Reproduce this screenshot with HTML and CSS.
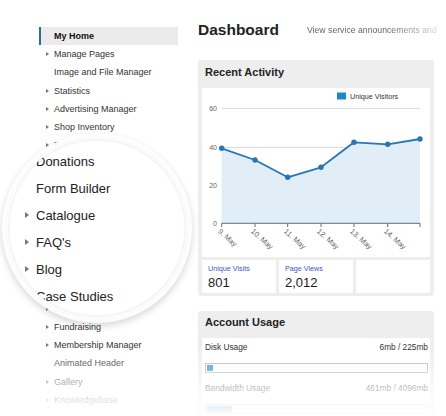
FILE: index.html
```html
<!DOCTYPE html>
<html lang="en">
<head>
    <meta charset="UTF-8">
    <meta name="viewport" content="width=device-width, initial-scale=1.0">
    <title>Dashboard</title>
    <link rel="stylesheet" href="styles.css">
</head>
<body>
    <div class="page">
        <nav class="sidebar">
            <ul class="menu">
                <li class="active">My Home</li>
                <li class="sub">Manage Pages</li>
                <li>Image and File Manager</li>
                <li class="sub">Statistics</li>
                <li class="sub">Advertising Manager</li>
                <li class="sub">Shop Inventory</li>
                <li class="sub">Events Calendar</li>
                <li>Online Store</li>
                <li>Donations</li>
                <li>Form Builder</li>
                <li class="sub">Catalogue</li>
                <li class="sub">FAQ's</li>
                <li class="sub">Blog</li>
                <li>Case Studies</li>
                <li>Testimonials</li>
                <li class="sub">Newsletter Manager</li>
                <li class="sub">Fundraising</li>
                <li class="sub">Membership Manager</li>
                <li>Animated Header</li>
                <li class="sub">Gallery</li>
                <li class="sub">Knowledgebase</li>
            </ul>
        </nav>

        <main class="main">
            <header class="page-head">
                <h1>Dashboard</h1>
                <span class="divider"></span>
                <p class="intro">View service announcements and</p>
            </header>

            <section class="panel">
                <h2 class="panel-head">Recent Activity</h2>
                <div class="chart-box">
                    <svg class="chart" width="228" height="169" viewBox="0 0 228 169">
                        <rect x="135" y="4.5" width="9" height="7" fill="#1c87c9"/>
                        <text class="legend" x="148" y="10.5">Unique Visitors</text>

                        <g stroke="#d9d9d9" stroke-width="1">
                            <line x1="19.7" y1="20.3" x2="218" y2="20.3"/>
                            <line x1="19.7" y1="59.3" x2="218" y2="59.3"/>
                            <line x1="19.7" y1="97.7" x2="218" y2="97.7"/>
                        </g>

                        <path d="M19.7 60.3 L53 72 L85.7 89.3 L119 79.3 L152 54.3 L185.7 56.3 L218 51 L218 135.3 L19.7 135.3 Z" fill="#e1eef7"/>
                        <polyline points="19.7,60.3 53,72 85.7,89.3 119,79.3 152,54.3 185.7,56.3 218,51" fill="none" stroke="#2877b0" stroke-width="1.8" stroke-linejoin="round"/>
                        <g fill="#2877b0">
                            <circle cx="19.7" cy="60.3" r="2.7"/>
                            <circle cx="53" cy="72" r="2.7"/>
                            <circle cx="85.7" cy="89.3" r="2.7"/>
                            <circle cx="119" cy="79.3" r="2.7"/>
                            <circle cx="152" cy="54.3" r="2.7"/>
                            <circle cx="185.7" cy="56.3" r="2.7"/>
                            <circle cx="218" cy="51" r="2.7"/>
                        </g>

                        <g stroke="#56718a" stroke-width="1">
                            <line x1="19.7" y1="135.3" x2="218" y2="135.3"/>
                            <line x1="19.7" y1="135.3" x2="19.7" y2="139"/>
                            <line x1="53" y1="135.3" x2="53" y2="139"/>
                            <line x1="85.7" y1="135.3" x2="85.7" y2="139"/>
                            <line x1="119" y1="135.3" x2="119" y2="139"/>
                            <line x1="152" y1="135.3" x2="152" y2="139"/>
                            <line x1="185.7" y1="135.3" x2="185.7" y2="139"/>
                            <line x1="218" y1="135.3" x2="218" y2="139"/>
                        </g>

                        <g class="axis-y" text-anchor="end">
                            <text x="15" y="22.8">60</text>
                            <text x="15" y="61.8">40</text>
                            <text x="15" y="100.2">20</text>
                            <text x="15" y="137.8">0</text>
                        </g>

                        <g class="axis-x">
                            <text transform="translate(15.5 144) rotate(42)">9. May</text>
                            <text transform="translate(48.5 144) rotate(42)">10. May</text>
                            <text transform="translate(81.5 144) rotate(42)">11. May</text>
                            <text transform="translate(114.5 144) rotate(42)">12. May</text>
                            <text transform="translate(147.5 144) rotate(42)">13. May</text>
                            <text transform="translate(181.5 144) rotate(42)">14. May</text>
                        </g>
                    </svg>
                </div>
                <div class="stats">
                    <div class="stat">
                        <span class="stat-label">Unique Visits</span>
                        <span class="stat-value">801</span>
                    </div>
                    <div class="stat">
                        <span class="stat-label">Page Views</span>
                        <span class="stat-value">2,012</span>
                    </div>
                    <div class="stat"></div>
                </div>
            </section>

            <section class="panel">
                <h2 class="panel-head usage-head">Account Usage</h2>
                <div class="usage">
                    <div class="usage-row">
                        <span>Disk Usage</span>
                        <span>6mb / 225mb</span>
                    </div>
                    <div class="bar"><div class="bar-fill" style="width: 2.7%"></div></div>
                    <div class="usage-row">
                        <span>Bandwidth Usage</span>
                        <span>461mb / 4096mb</span>
                    </div>
                    <div class="bar"><div class="bar-fill" style="width: 11.3%"></div></div>
                </div>
            </section>
        </main>
    </div>

    <!-- magnified part of the menu -->
    <div class="lens" aria-hidden="true">
        <ul class="menu lens-menu">
            <li>Donations</li>
            <li>Form Builder</li>
            <li class="sub">Catalogue</li>
            <li class="sub">FAQ's</li>
            <li class="sub">Blog</li>
            <li>Case Studies</li>
        </ul>
    </div>

    <div class="fade"></div>
</body>
</html>
```

FILE: styles.css
```css
body {
    margin: 0;
    width: 446px;
    height: 416px;
    overflow: hidden;
    position: relative;
    font-family: "Liberation Sans", Arial, sans-serif;
    color: #333;
    background-color: white;
}
.page {
    display: flex;
}

/* sidebar menu */
.sidebar {
    flex: none;
    width: 198px;
    padding: 27px 0 0 39px;
    box-sizing: border-box;
}
.menu {
    list-style: none;
    margin: 0;
    padding: 0;
    width: 139px;
    font-size: 9px;
}
.menu li {
    display: flex;
    align-items: center;
    height: 18.2px;
    white-space: nowrap;
}
.menu li::before {
    content: "";
    margin: 0 5px 0 7px;
    border-left: 3px solid transparent;
    border-top: 2.5px solid transparent;
    border-bottom: 2.5px solid transparent;
}
.menu .sub::before {
    border-left-color: #777;
}
.menu .active {
    background-color: #ebebeb;
    border-left: 2px solid #2b6d9e;
    font-weight: bold;
    color: #111;
}
.menu .active::before {
    margin-left: 5px;
}

/* main column */
.main {
    flex: none;
    width: 236px;
    padding-top: 16px;
}
.page-head {
    display: flex;
    align-items: center;
    height: 28px;
    margin-bottom: 16px;
    white-space: nowrap;
}
h1 {
    margin: 0;
    font-size: 15.5px;
    color: #222;
}
.divider {
    width: 1px;
    height: 24px;
    background-color: #ddd;
    margin: 0 13px 0 15px;
}
.intro {
    margin: 0;
    font-size: 8.7px;
    color: #666;
    -webkit-mask-image: linear-gradient(to right, #000 62%, rgba(0, 0, 0, 0.25));
    mask-image: linear-gradient(to right, #000 62%, rgba(0, 0, 0, 0.25));
}

.panel {
    background-color: #eee;
    border-radius: 3px;
    padding: 0 4px 3px;
}
.panel + .panel {
    margin-top: 15px;
}
.panel-head {
    margin: 0;
    padding: 0 3px 4px;
    font-size: 11px;
    line-height: 24px;
    color: #222;
}
.usage-head {
    line-height: 22px;
    padding-bottom: 5px;
}

.chart-box {
    background-color: white;
    height: 169px;
}
.chart {
    display: block;
    font-family: "Liberation Sans", Arial, sans-serif;
}
.chart .legend {
    font-size: 7.2px;
    fill: #333;
}
.axis-y text {
    font-size: 7px;
    fill: #666;
}
.axis-x text {
    font-size: 7.5px;
    fill: #666;
}

.stats {
    display: grid;
    grid-template-columns: repeat(3, 1fr);
    gap: 3px;
    margin-top: 3px;
}
.stat {
    background-color: white;
    height: 33px;
    padding: 4px 6px 0;
    box-sizing: border-box;
}
.stat-label {
    display: block;
    font-size: 7.2px;
    line-height: 9px;
    color: #4652c6;
}
.stat-value {
    display: block;
    font-size: 13px;
    line-height: 19px;
    color: #1a1a1a;
}

.usage {
    background-color: white;
    padding: 0 2px 10px 3px;
    font-size: 8.3px;
}
.usage-row {
    display: flex;
    justify-content: space-between;
    line-height: 18px;
}
.bar {
    height: 10px;
    border: 1px solid #b8b8b8;
    box-sizing: border-box;
    background-color: #fcfcfc;
    padding: 1px;
    margin: 7px 0 6px;
}
.bar-fill {
    height: 100%;
    background-color: #3d8fc9;
}

/* magnifying glass over the menu */
.lens {
    position: absolute;
    left: 5px;
    top: 136px;
    width: 184px;
    height: 184px;
    box-sizing: border-box;
    border: 3px solid #fbfbfb;
    border-radius: 50%;
    background-color: white;
    overflow: hidden;
    box-shadow: 0 0 0 3px rgba(255, 255, 255, 0.92), 0 3px 7px 3px rgba(0, 0, 0, 0.16), inset 0 0 3px rgba(0, 0, 0, 0.15);
}
.lens-menu {
    width: auto;
    padding-top: 8.5px;
    font-size: 13px;
    color: #222;
}
.lens-menu li {
    height: 27px;
}
.lens-menu li::before {
    margin: 0 7px 0 17px;
    border-left-width: 4px;
    border-top-width: 3.5px;
    border-bottom-width: 3.5px;
}

.fade {
    position: absolute;
    left: 0;
    right: 0;
    bottom: 0;
    height: 66px;
    pointer-events: none;
    background: linear-gradient(rgba(255, 255, 255, 0), rgba(255, 255, 255, 0.6) 50%, rgba(255, 255, 255, 0.85) 77%, rgba(255, 255, 255, 0.95));
}
```
